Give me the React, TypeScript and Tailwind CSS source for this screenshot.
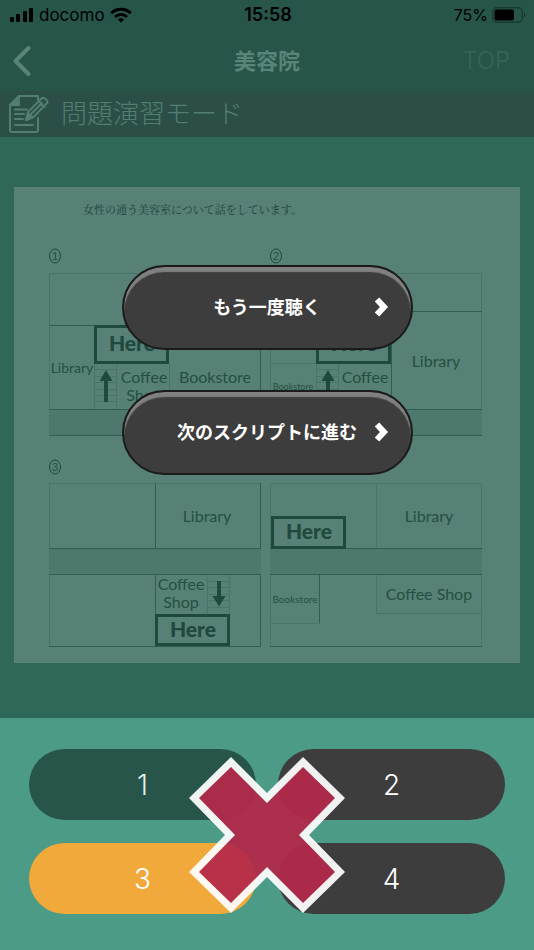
import type { ReactNode } from "react";

const JP = "font-['Inter','Noto_Sans_CJK_JP',sans-serif]";

function StatusBar() {
  return (
    <div className="grid h-[30px] grid-cols-3 items-center pl-[10px] pr-2 text-black">
      <div className="flex items-center gap-[5px]">
        <svg width="24" height="16" viewBox="0 0 24 16" fill="currentColor" aria-hidden="true">
          <rect x="0" y="10" width="4" height="5" rx="1" />
          <rect x="6" y="7" width="4" height="8" rx="1" />
          <rect x="13" y="4" width="4" height="11" rx="1" />
          <rect x="19" y="1" width="4" height="14" rx="1" />
        </svg>
        <span className="text-[17px] leading-5">docomo</span>
        <svg width="22" height="16" viewBox="0 0 22 16" fill="none" stroke="currentColor" strokeWidth="3" aria-hidden="true">
          <path d="M1.2 6.2C6.6.8 15.4.8 20.8 6.2" />
          <path d="M5 10c3.300-3.200 8.700-3.200 12 0" />
          <path d="M11 15.600L7.800 12.400c1.800-1.700 4.600-1.700 6.400 0z" fill="currentColor" stroke="none" />
        </svg>
      </div>
      <span className="text-center text-lg font-semibold leading-5">15:58</span>
      <div className="flex items-center justify-end gap-1">
        <span className="text-base leading-5">75%</span>
        <svg width="34" height="16" viewBox="0 0 34 16" aria-hidden="true">
          <rect x=".7" y=".7" width="29.600" height="14.600" rx="4" fill="none" stroke="#173a31" strokeWidth="1.400" />
          <rect x="2.500" y="2.500" width="19.500" height="11" rx="2" fill="#000" />
          <path d="M32 5.500c2 .8 2 4.200 0 5z" fill="#173a31" />
        </svg>
      </div>
    </div>
  );
}

function NavBar() {
  return (
    <div className="grid h-[61px] grid-cols-3 items-center px-3 text-[#5a8379]">
      <button type="button" aria-label="戻る" className="w-fit">
        <svg width="20" height="32" viewBox="0 0 20 32" fill="none" stroke="currentColor" strokeWidth="4" strokeLinecap="round" strokeLinejoin="round" aria-hidden="true">
          <path d="M16.500 3L3.500 16l13 13" />
        </svg>
      </button>
      <h1 className="text-center text-[22px] font-bold leading-8">美容院</h1>
      <button type="button" className="justify-self-end pr-3 text-2xl font-light text-[#376659]">
        TOP
      </button>
    </div>
  );
}

function ModeBar() {
  return (
    <div className="flex h-[46px] items-center gap-3 bg-[#2b4e47] pl-[9px] text-[#527e72]">
      <svg width="40" height="40" viewBox="0 0 40 40" fill="none" stroke="currentColor" strokeWidth="2" strokeLinejoin="round" strokeLinecap="round" aria-hidden="true">
        <path d="M29 6V2H10L1 11v25q0 2 2 2h24q2 0 2-2V24" />
        <path d="M10 2v9H1z" fill="currentColor" />
        <path d="M6 15.500h12M6 20h9M6 25h8M6 31h18" />
        <path d="M17 26l2-8L32.500 4.500q2-1.500 4.500.7t.7 4.300L24.500 23z" />
        <path d="M17 26l2-7 4.500 4.500zM30 7.500l5.500 5.500M21.500 20.500L33 9" fill="currentColor" />
      </svg>
      <h2 className="text-[26px] font-light leading-8">問題演習モード</h2>
    </div>
  );
}

/* Hairline wall between two places on a map. */
function Wall({ x, y, w = 1, h = 1, dark = false }: { x: number; y: number; w?: number; h?: number; dark?: boolean }) {
  return <rect x={x} y={y} width={w} height={h} fill={dark ? "#315d52" : "#4a736a"} />;
}

function Label({ x, y, size = 16, children }: { x: number; y: number; size?: number; children: ReactNode }) {
  return (
    <text x={x} y={y} fontSize={size} textAnchor="middle">
      {children}
    </text>
  );
}

function CoffeeShop({ x, y }: { x: number; y: number }) {
  return (
    <text y={y} fontSize={16} textAnchor="middle">
      <tspan x={x}>Coffee</tspan>
      <tspan x={x} dy={18}>
        Shop
      </tspan>
    </text>
  );
}

function Here({ x, y, h = 32 }: { x: number; y: number; h?: number }) {
  return (
    <g>
      <rect x={x + 1.5} y={y + 1.5} width={72} height={h - 3} fill="none" stroke="#20493e" strokeWidth={3} />
      <text x={x + 38} y={y + (h > 35 ? 26 : 23)} fontSize={21} fontWeight={900} textAnchor="middle" fill="#20493e">
        Here
      </text>
    </g>
  );
}

function Stairs({ x, y, h, down = false }: { x: number; y: number; h: number; down?: boolean }) {
  const steps = down ? [6, 12, 19, 25, 32] : [6, 13, 19, 26, 32, 38];
  return (
    <g>
      <Wall x={x} y={y} h={h} />
      <Wall x={x + 22} y={y} h={h} />
      {steps.map((s) => (
        <Wall key={s} x={x} y={y + s} w={22} />
      ))}
      <path
        transform={`translate(${x + 11} ${y})`}
        d={down ? "M-1 6h4v15h4.500L1 31.500-5.500 21H-1z" : "M-1 39h4V18h4.500L1 7-5.500 18H-1z"}
        fill="#20493e"
      />
    </g>
  );
}

function CircledNumber({ x, y, children }: { x: number; y: number; children: ReactNode }) {
  return (
    <g>
      <ellipse cx={x} cy={y} rx={5.5} ry={7} fill="none" stroke="#20493e" />
      <text x={x} y={y + 4} fontSize={11} textAnchor="middle" fontFamily="Liberation Sans, sans-serif">
        {children}
      </text>
    </g>
  );
}

function Road({ x, y }: { x: number; y: number }) {
  return (
    <g>
      <rect x={x} y={y} width={212} height={27} fill="#4e776e" />
      <Wall x={x} y={y} w={212} dark />
      <Wall x={x} y={y + 26} w={212} dark />
    </g>
  );
}

function MapSheet() {
  return (
    <svg viewBox="0 0 506 476" className="block w-full" fill="#24503f" fontFamily="Lato, sans-serif" role="img" aria-label="問題の地図">
      <rect width="506" height="476" fill="#578077" />
      <text x="69" y="27" fontSize="11" fill="#1b4236" fontFamily="Noto Serif CJK JP, Noto Sans CJK JP, serif">
        女性の通う美容室について話をしています。
      </text>

      <CircledNumber x={41} y={69}>1</CircledNumber>
      <Wall x={35} y={86} w={212} />
      <Wall x={35} y={86} h={162} />
      <Wall x={246} y={86} h={162} dark />
      <Wall x={35} y={138} w={46} dark />
      <Wall x={80} y={138} h={85} dark />
      <Wall x={155} y={176} h={47} />
      <Road x={35} y={222} />
      <Stairs x={80} y={176} h={46} />
      <Here x={80} y={138} h={39} />
      <Label x={58} y={186} size={14}>Library</Label>
      <CoffeeShop x={130} y={196} />
      <Label x={201} y={196}>Bookstore</Label>

      <CircledNumber x={262} y={69}>2</CircledNumber>
      <Wall x={256} y={86} w={212} />
      <Wall x={256} y={86} h={162} />
      <Wall x={467} y={86} h={162} />
      <Wall x={377} y={124} w={91} dark />
      <Wall x={377} y={124} h={99} dark />
      <Wall x={256} y={176} w={46} />
      <Road x={256} y={222} />
      <Stairs x={302} y={176} h={46} />
      <Here x={302} y={138} h={39} />
      <Label x={279} y={203} size={9}>Bookstore</Label>
      <CoffeeShop x={351} y={196} />
      <Label x={422} y={180}>Library</Label>

      <CircledNumber x={41} y={280}>3</CircledNumber>
      <Wall x={35} y={296} w={212} />
      <Wall x={35} y={296} h={164} />
      <Wall x={246} y={296} h={164} dark />
      <Wall x={141} y={296} h={66} dark />
      <Wall x={141} y={388} h={72} dark />
      <Wall x={35} y={459} w={212} dark />
      <Road x={35} y={361} />
      <Stairs x={193} y={388} h={39} down />
      <Here x={141} y={427} />
      <Label x={193} y={335}>Library</Label>
      <CoffeeShop x={167} y={403} />

      <Wall x={256} y={296} w={212} />
      <Wall x={256} y={296} h={164} />
      <Wall x={467} y={296} h={164} />
      <Wall x={362} y={296} h={66} />
      <Wall x={362} y={388} h={39} />
      <Wall x={362} y={426} w={106} />
      <Wall x={305} y={388} h={49} dark />
      <Wall x={256} y={436} w={50} />
      <Wall x={256} y={459} w={212} dark />
      <Road x={256} y={361} />
      <Here x={257} y={329} h={33} />
      <Label x={415} y={335}>Library</Label>
      <Label x={281} y={416} size={10}>Bookstore</Label>
      <Label x={415} y={413}>Coffee Shop</Label>
    </svg>
  );
}

function PillButton({ children }: { children: ReactNode }) {
  return (
    <button
      type="button"
      className="relative h-[85px] w-[291px] rounded-full border-2 border-[#1c1b1b] bg-[#3d3d3d] text-lg font-bold text-white shadow-[inset_0_5px_1px_#808080]"
    >
      {children}
      <svg width="14" height="20" viewBox="0 0 14 20" fill="none" stroke="currentColor" strokeWidth="6" className="absolute right-[22px] top-[30px]" aria-hidden="true">
        <path d="M2 2.500l7 7.500-7 7.500" />
      </svg>
    </button>
  );
}

const answers = [
  { n: 1, style: "bg-[#27554a] text-[#e6efed]" },
  { n: 2, style: "bg-[#3d3d3d] text-white" },
  { n: 3, style: "bg-[#f1a93b] text-white" },
  { n: 4, style: "bg-[#3d3d3d] text-white" },
];

function AnswerPanel() {
  return (
    <section className="relative flex-1 bg-[#4b9b86] px-[29px] pb-9 pt-[31px]">
      <div className="grid grid-cols-2 gap-x-[22px] gap-y-[23px]">
        {answers.map(({ n, style }) => (
          <button key={n} type="button" className={`h-[71px] rounded-full text-[28px] font-light ${style}`}>
            {n}
          </button>
        ))}
      </div>
      <svg
        width="156"
        height="156"
        viewBox="0 0 156 156"
        className="pointer-events-none absolute left-1/2 top-[39px] -translate-x-1/2 opacity-[.93]"
        role="img"
        aria-label="不正解"
      >
        <path d="M42 0L0 41l36 37L0 115l42 41 36-36 36 36 42-41-36-37 36-37L114 0 78 36z" fill="#fff" />
        <path d="M42 10L10 41l36 37-36 37 32 31 36-36 36 36 32-31-36-37 36-37-32-31-36 36z" fill="#b4284a" />
      </svg>
    </section>
  );
}

export default function App() {
  return (
    <div className={`flex min-h-screen flex-col bg-[#2f6859] ${JP}`}>
      <header className="bg-[#27554a]">
        <StatusBar />
        <NavBar />
      </header>
      <ModeBar />
      <main className="px-[14px] pb-[55px] pt-[50px]">
        <div className="relative">
          <MapSheet />
          <div className="absolute inset-x-0 top-[78px] flex flex-col items-center gap-10">
            <PillButton>もう一度聴く</PillButton>
            <PillButton>次のスクリプトに進む</PillButton>
          </div>
        </div>
      </main>
      <AnswerPanel />
    </div>
  );
}
